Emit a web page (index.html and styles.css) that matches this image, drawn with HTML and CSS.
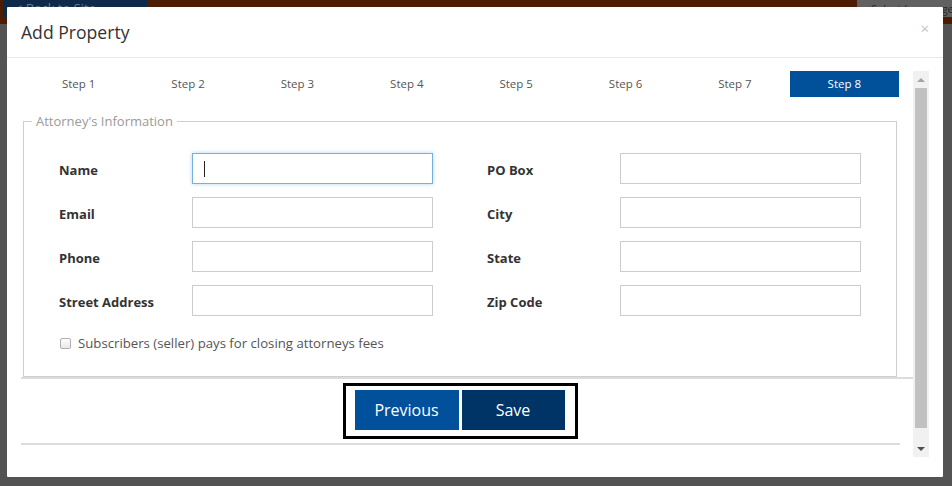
FILE: index.html
```html
<!DOCTYPE html>
<html>
<head>
<meta charset="utf-8">
<link rel="stylesheet" href="styles.css">
</head>
<body>
<div class="page">
  <div class="topbar">
    <div class="back">&lt; Back to Site</div>
    <div class="lang">Select Language</div>
  </div>
</div>
<div class="modal">
  <div class="modal-header">
    <div class="title">Add Property</div>
    <div class="close">×</div>
  </div>
  <div class="modal-body">
    <div class="scroll">
      <div class="content">
        <div class="tabs">
          <div class="tab">Step 1</div>
          <div class="tab">Step 2</div>
          <div class="tab">Step 3</div>
          <div class="tab">Step 4</div>
          <div class="tab">Step 5</div>
          <div class="tab">Step 6</div>
          <div class="tab">Step 7</div>
          <div class="tab active">Step 8</div>
        </div>
        <fieldset class="box">
          <legend>Attorney's Information</legend>
          <div class="grid">
            <div class="field"><label>Name</label><div class="inp focus"><span class="caret"></span></div></div>
            <div class="field"><label>PO Box</label><div class="inp"></div></div>
            <div class="field"><label>Email</label><div class="inp"></div></div>
            <div class="field"><label>City</label><div class="inp"></div></div>
            <div class="field"><label>Phone</label><div class="inp"></div></div>
            <div class="field"><label>State</label><div class="inp"></div></div>
            <div class="field"><label>Street Address</label><div class="inp"></div></div>
            <div class="field"><label>Zip Code</label><div class="inp"></div></div>
          </div>
          <div class="check"><span class="cb"></span><span>Subscribers (seller) pays for closing attorneys fees</span></div>
        </fieldset>
        <div class="footer">
          <div class="btn-group">
            <div class="btn prev">Previous</div>
            <div class="btn save">Save</div>
          </div>
        </div>
        <div class="rule"></div>
      </div>
      <div class="sbar">
        <div class="sbtn"><span class="up"></span></div>
        <div class="strack"><div class="thumb"></div></div>
        <div class="sbtn"><span class="down"></span></div>
      </div>
    </div>
  </div>
</div>
</body>
</html>
```

FILE: styles.css
```css
html, body {
  margin: 0;
  padding: 0;
}
body {
  width: 952px;
  height: 486px;
  overflow: hidden;
  background: #535353;
  font-family: "Open Sans", "Liberation Sans", sans-serif;
  position: relative;
}
.page {
  height: 486px;
}
.topbar {
  height: 24px;
  background: #4c1d02;
  display: flex;
  justify-content: space-between;
  align-items: flex-start;
}
.back {
  margin-left: 3px;
  width: 144px;
  height: 17px;
  background: #0d2a4a;
  color: #6a7a8c;
  font-size: 13px;
  line-height: 17px;
  padding-left: 12px;
  box-sizing: border-box;
  white-space: nowrap;
}
.lang {
  width: 95px;
  height: 17px;
  background: #616161;
  color: #2a2a2a;
  font-size: 11px;
  line-height: 17px;
  padding-left: 14px;
  box-sizing: border-box;
  white-space: nowrap;
}
.modal {
  position: absolute;
  left: 7px;
  top: 7px;
  width: 936px;
  height: 470px;
  background: #fff;
  border-radius: 1px;
  box-sizing: border-box;
}
.modal-header {
  height: 50px;
  border-bottom: 1px solid #e8e8e8;
  display: flex;
  align-items: center;
  justify-content: space-between;
  padding: 0 14px 0 14px;
}
.title {
  font-size: 17.6px;
  color: #333;
  margin-top: 0;
}
.close {
  font-size: 15px;
  color: #c4c4c4;
  margin-top: -9px;
}
.modal-body {
  padding: 13px 14px 0 14px;
}
.scroll {
  display: flex;
  height: 386px;
}
.content {
  width: 892px;
  overflow: hidden;
}
.tabs {
  margin-left: 3px;
  width: 875px;
  height: 26px;
  display: grid;
  grid-template-columns: repeat(8, 1fr);
}
.tab {
  font-size: 11.5px;
  color: #555;
  display: flex;
  align-items: center;
  justify-content: center;
  padding-bottom: 1px;
  box-sizing: border-box;
}
.tab.active {
  background: #01509a;
  color: #fff;
}
.box {
  margin: 16px 0 0 2px;
  width: 874px;
  box-sizing: border-box;
  border: 1px solid #cfcfcf;
  padding: 24px 34px 23px 35px;
  min-width: 0;
}
legend {
  font-size: 13px;
  color: #9a9a9a;
  padding: 0 4px;
  margin-left: -27px;
  line-height: 16px;
}
.grid {
  display: grid;
  grid-template-columns: 374px 374px;
  column-gap: 54px;
  row-gap: 13px;
}
.field {
  display: flex;
  align-items: center;
}
label {
  width: 133px;
  font-size: 13px;
  font-weight: bold;
  color: #333;
  padding-top: 2px;
}
.inp {
  width: 241px;
  height: 31px;
  border: 1px solid #cccccc;
  box-sizing: border-box;
  position: relative;
}
.inp.focus {
  border-color: #73b1e3;
  box-shadow: 0 0 4px rgba(102, 175, 233, 0.5);
}
.caret {
  position: absolute;
  left: 11px;
  top: 7px;
  width: 1px;
  height: 16px;
  background: #222;
}
.check {
  margin-top: 17px;
  height: 20px;
  display: flex;
  align-items: center;
  font-size: 13.2px;
  color: #555;
}
.cb {
  width: 9px;
  height: 9px;
  border: 1px solid #b0b0b0;
  border-radius: 2px;
  background: linear-gradient(#fdfdfd, #e8e8e8);
  margin: 0 7px 0 1px;
}
.footer {
  border-top: 2px solid #dcdcdc;
  width: 892px;
  padding: 4px 14px 0 0;
  box-sizing: border-box;
  display: flex;
  justify-content: center;
}
.btn-group {
  border: 3px solid #000;
  padding: 4px 10px 6px 9px;
  display: flex;
  gap: 3px;
}
.btn {
  width: 104px;
  height: 40px;
  display: flex;
  align-items: center;
  justify-content: center;
  color: #fff;
  font-size: 16px;
}
.btn.save {
  width: 103px;
}
.prev {
  background: #00509b;
}
.save {
  background: #003366;
}
.rule {
  margin-top: 4px;
  width: 879px;
  height: 2px;
  background: #dcdcdc;
}
.sbar {
  width: 16px;
  background: #f1f1f1;
  display: flex;
  flex-direction: column;
}
.sbtn {
  height: 17px;
  display: flex;
  align-items: center;
  justify-content: center;
}
.strack {
  flex: 1;
  padding: 0 2px;
  display: flex;
  flex-direction: column;
}
.thumb {
  height: 340px;
  background: #c1c1c1;
}
.up {
  width: 0;
  height: 0;
  border-left: 4px solid transparent;
  border-right: 4px solid transparent;
  border-bottom: 4px solid #a3a3a3;
}
.down {
  width: 0;
  height: 0;
  border-left: 4px solid transparent;
  border-right: 4px solid transparent;
  border-top: 4px solid #505050;
}
```
